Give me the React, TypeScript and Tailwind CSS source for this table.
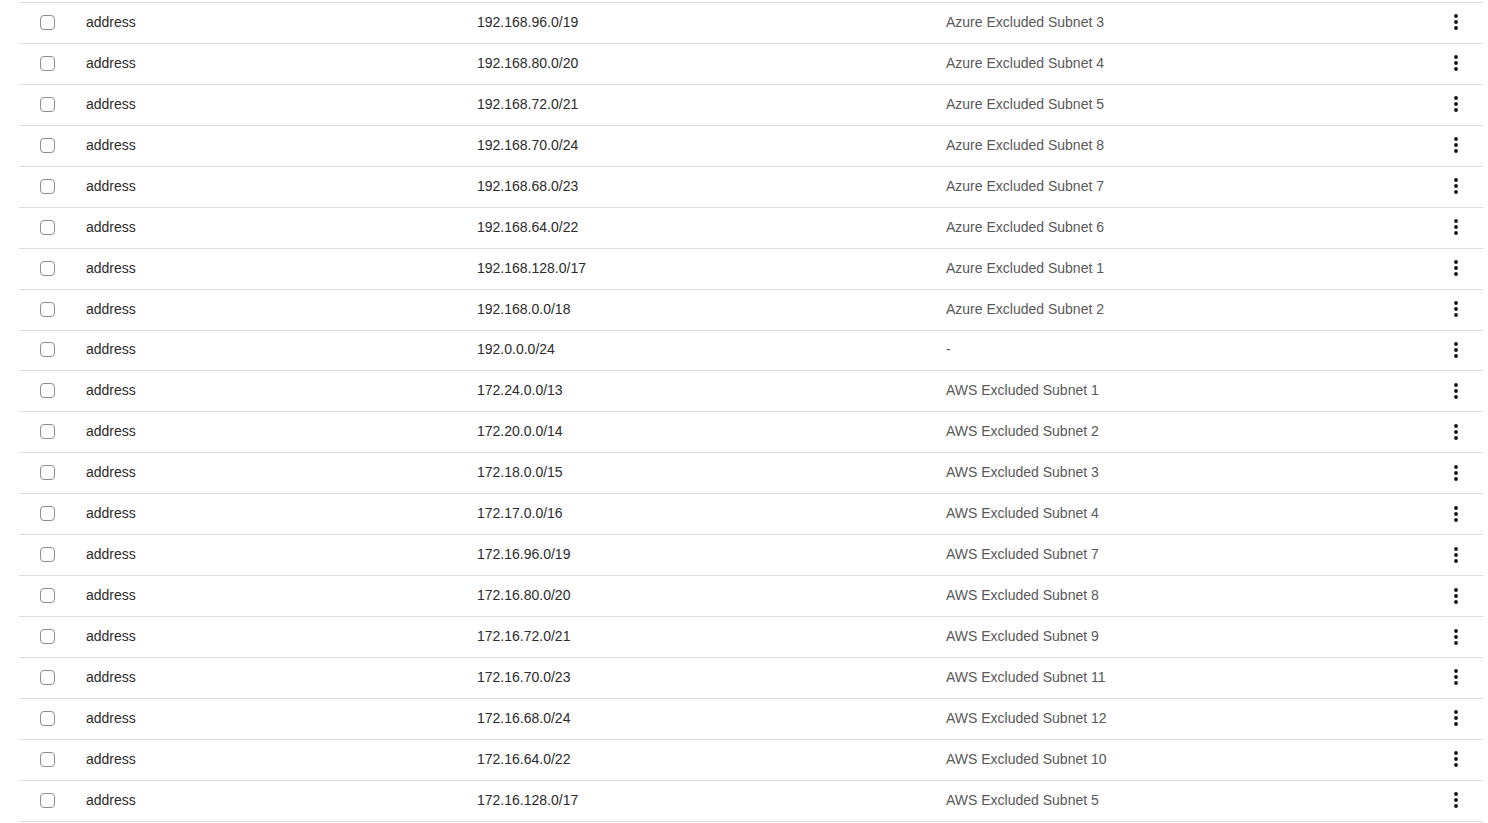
import React from "react";

const rows: [string, string][] = [
  ["192.168.96.0/19", "Azure Excluded Subnet 3"],
  ["192.168.80.0/20", "Azure Excluded Subnet 4"],
  ["192.168.72.0/21", "Azure Excluded Subnet 5"],
  ["192.168.70.0/24", "Azure Excluded Subnet 8"],
  ["192.168.68.0/23", "Azure Excluded Subnet 7"],
  ["192.168.64.0/22", "Azure Excluded Subnet 6"],
  ["192.168.128.0/17", "Azure Excluded Subnet 1"],
  ["192.168.0.0/18", "Azure Excluded Subnet 2"],
  ["192.0.0.0/24", "-"],
  ["172.24.0.0/13", "AWS Excluded Subnet 1"],
  ["172.20.0.0/14", "AWS Excluded Subnet 2"],
  ["172.18.0.0/15", "AWS Excluded Subnet 3"],
  ["172.17.0.0/16", "AWS Excluded Subnet 4"],
  ["172.16.96.0/19", "AWS Excluded Subnet 7"],
  ["172.16.80.0/20", "AWS Excluded Subnet 8"],
  ["172.16.72.0/21", "AWS Excluded Subnet 9"],
  ["172.16.70.0/23", "AWS Excluded Subnet 11"],
  ["172.16.68.0/24", "AWS Excluded Subnet 12"],
  ["172.16.64.0/22", "AWS Excluded Subnet 10"],
  ["172.16.128.0/17", "AWS Excluded Subnet 5"],
];

function Kebab() {
  return (
    <svg width="6" height="18" viewBox="0 0 6 18" className="block">
      <circle cx="3" cy="3" r="1.9" fill="#111" />
      <circle cx="3" cy="9" r="1.9" fill="#111" />
      <circle cx="3" cy="15" r="1.9" fill="#111" />
    </svg>
  );
}

export default function App() {
  return (
    <div className="w-full bg-white pt-[2px] pl-[19px] pr-[5px] font-['Liberation_Sans',Arial,sans-serif] text-[14px]">
      <div className="border-t border-[#dcdcdc]">
        {rows.map(([ip, desc], i) => (
          <div
            key={i}
            className="grid h-[40.95px] grid-cols-[67px_391px_469px_1fr_54px] items-center border-b border-[#dcdcdc] pb-[1px]"
          >
            <div className="pl-[21px]">
              <span className="block h-[15px] w-[15px] rounded-[4px] border border-[#8e8e8e] bg-white" />
            </div>
            <span className="text-[#2b2b2b]">address</span>
            <span className="text-[#2b2b2b]">{ip}</span>
            <span className="text-[#585858]">{desc}</span>
            <div className="flex justify-center">
              <Kebab />
            </div>
          </div>
        ))}
      </div>
    </div>
  );
}
